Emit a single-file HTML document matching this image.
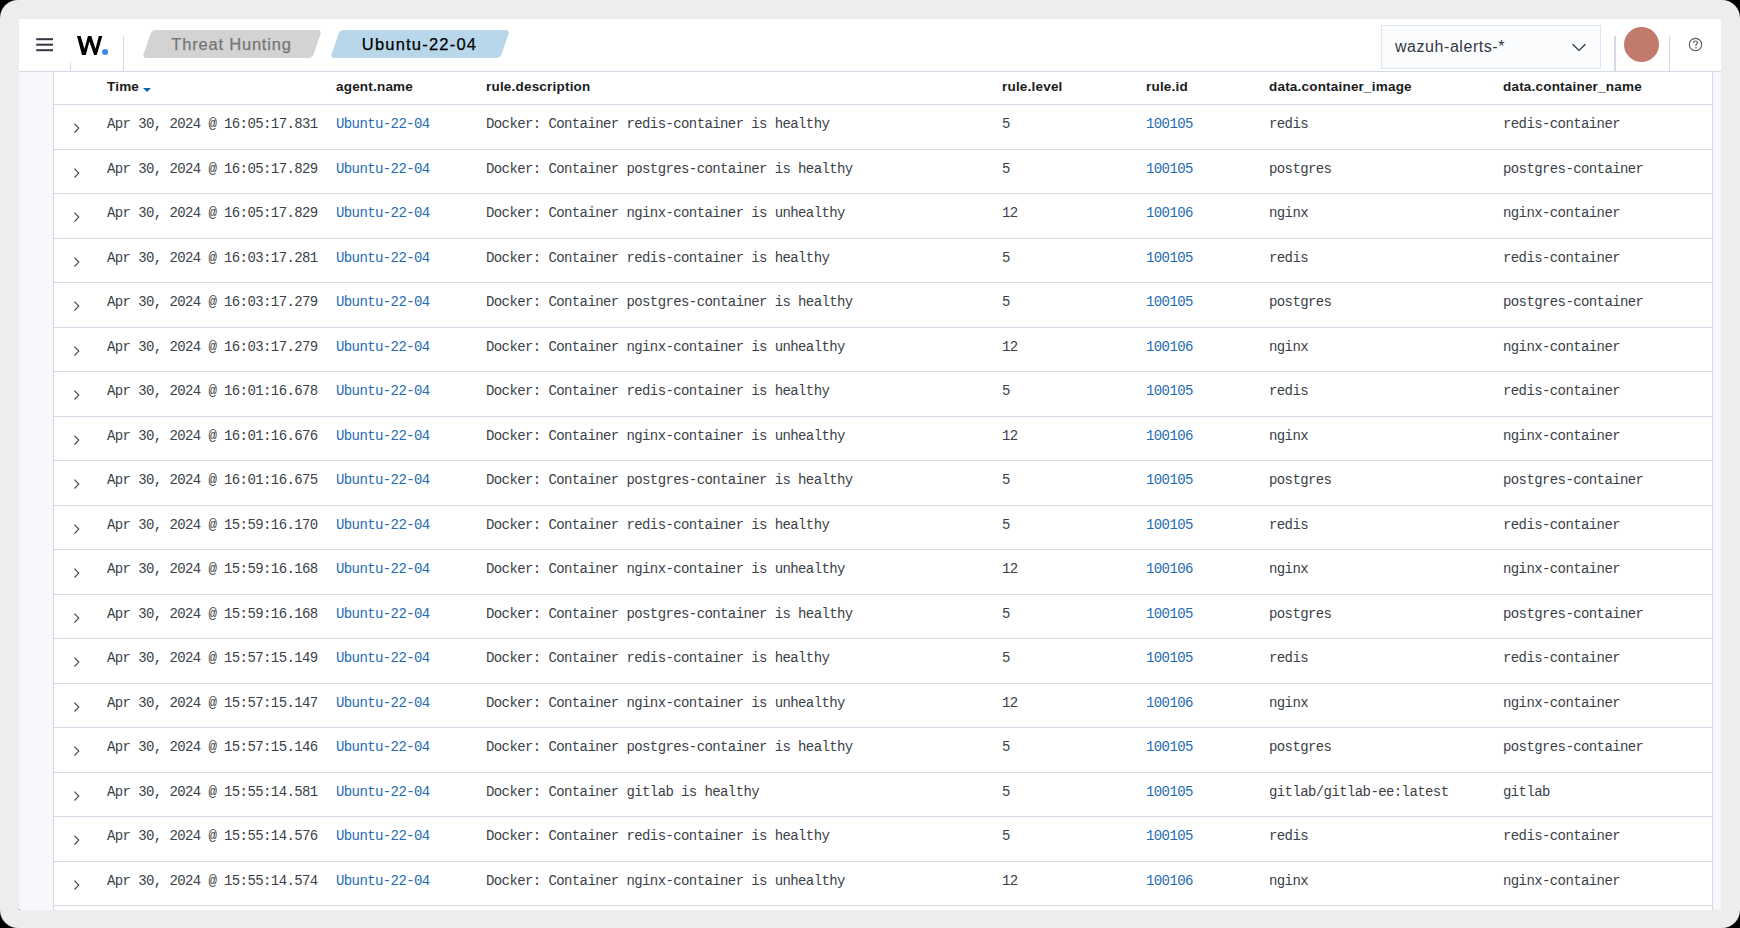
<!DOCTYPE html>
<html><head><meta charset="utf-8"><style>
html,body{margin:0;padding:0;}
body{width:1740px;height:928px;background:#000;overflow:hidden;position:relative;font-family:"Liberation Sans",sans-serif;}
.frame{position:absolute;left:0;top:0;width:1740px;height:928px;background:#ededed;border-radius:18px;}
.app{position:absolute;left:19px;top:19px;width:1702px;height:891px;background:#fff;}
.hb{position:absolute;left:19px;top:71px;width:1702px;height:1px;background:#d3dae6;}
.side{position:absolute;background:#f7f8fc;}
.vl{position:absolute;width:1px;background:#d3dae6;}
.th{position:absolute;top:79px;font:bold 13.5px/15px "Liberation Sans",sans-serif;letter-spacing:0.2px;color:#1a1c21;}
.hl{position:absolute;left:53px;width:1660px;height:1px;background:#d3dae6;}
.row{position:absolute;left:0;width:1740px;height:44px;}
.c{position:absolute;top:13px;line-height:15px;font-size:14px;letter-spacing:-0.6px;font-family:"Liberation Mono",monospace;color:#3b3f48;white-space:pre;}
.lk{color:#1f6cb3;}
.chev{position:absolute;left:69px;top:16px;width:16px;height:16px;}
.sort{display:inline-block;width:0;height:0;border-left:4px solid transparent;border-right:4px solid transparent;border-top:4.5px solid #0b64b0;margin-left:4px;vertical-align:-0.5px;}
.ham{position:absolute;left:36px;width:17px;height:2px;background:#3a3d46;border-radius:0.5px;}
.logo{position:absolute;left:70px;top:30px;}
.bc{position:absolute;top:30px;height:28px;}
.bc::before{content:"";position:absolute;left:3.6px;top:0;right:3px;bottom:-0.4px;transform:skewX(-19deg);border-radius:4px;}
.bc span{position:relative;display:block;text-align:center;font:16.5px/28px "Liberation Sans",sans-serif;letter-spacing:0.8px;-webkit-text-stroke:0.25px currentColor;}
.bc1{left:143px;width:177px;}
.bc1::before{background:#d3d3d3;}
.bc1 span{color:#767676;}
.bc2{left:331px;width:177px;}
.bc2::before{background:#b9d7ea;}
.bc2 span{color:#000;}
.sel{position:absolute;left:1381px;top:25px;width:218px;height:42px;background:#fbfcfd;border:1px solid #dfe5ef;}
.sel span{position:absolute;left:13px;top:0px;font:16px/42px "Liberation Sans",sans-serif;color:#343741;letter-spacing:0.55px;}
.selchev{position:absolute;left:189px;top:16.5px;width:16px;height:10px;}
.avatar{position:absolute;left:1624px;top:27px;width:35px;height:35px;border-radius:50%;background:#c27a6c;}
.help{position:absolute;left:1688px;top:37px;width:15px;height:15px;}

</style></head><body>
<div class="frame"></div><div class="app"></div>
<div class="side" style="left:19px;top:72px;width:34px;height:838px"></div><div class="side" style="left:1713px;top:72px;width:8px;height:838px"></div><div class="vl" style="left:53px;top:72px;height:838px"></div><div class="vl" style="left:1712px;top:72px;height:838px"></div>
<div class="hb"></div><div style="position:absolute;left:19px;top:909px;width:1px;height:1px;background:#3a8ee6"></div>
<svg style="position:absolute;left:30px;top:30px" width="30" height="30" viewBox="30 30 30 30"><rect x="36.2" y="38.2" width="16.8" height="2" fill="#343741"/><rect x="36.2" y="43.7" width="16.8" height="2" fill="#343741"/><rect x="36.2" y="49.2" width="16.8" height="2" fill="#343741"/></svg>
<svg class="logo" width="45" height="30" viewBox="70 30 45 30"><path d="M77 36 L80.6 36 L84.5 48.8 L87.9 36 L91.3 36 L95.5 48.8 L98.8 36 L102.3 36 L96.8 54.9 L94.1 54.9 L89.4 41.6 L85.8 54.9 L82 54.9 Z" fill="#000"/><circle cx="105.1" cy="52" r="3" fill="#3884f6"/></svg>
<div class="vl" style="left:70px;top:63px;height:8px"></div>
<div class="vl" style="left:123px;top:36px;height:35px"></div>
<div class="bc bc1"><span>Threat Hunting</span></div>
<div class="bc bc2"><span style="letter-spacing:1.2px">Ubuntu-22-04</span></div>
<div class="sel"><span>wazuh-alerts-*</span>
<svg class="selchev" viewBox="0 0 16 10"><path d="M1.6 1.2 L8 7.4 L14.4 1.2" fill="none" stroke="#343741" stroke-width="1.35"/></svg></div>
<div class="vl" style="left:1614px;top:36px;height:35px;width:2px;background:#d3dae6"></div>
<div class="avatar"></div>
<div class="vl" style="left:1669px;top:36px;height:35px"></div>
<svg class="help" viewBox="0 0 16 16"><circle cx="8" cy="8" r="6.6" fill="none" stroke="#535966" stroke-width="1.2"/><path d="M5.9 6.3 C5.9 4.9 7 4.3 8 4.3 C9.1 4.3 10.1 5 10.1 6.1 C10.1 7.4 8.4 7.6 8.4 8.9 L8.4 9.4" fill="none" stroke="#535966" stroke-width="1.2"/><circle cx="8.4" cy="11.4" r="0.8" fill="#535966"/></svg>
<div class="th" style="left:107px">Time<span class="sort"></span></div><div class="th" style="left:336px">agent.name</div><div class="th" style="left:486px">rule.description</div><div class="th" style="left:1002px">rule.level</div><div class="th" style="left:1146px">rule.id</div><div class="th" style="left:1269px">data.container_image</div><div class="th" style="left:1503px">data.container_name</div>
<div class="hl" style="top:104px"></div><div class="hl" style="top:149px"></div><div class="hl" style="top:193px"></div><div class="hl" style="top:238px"></div><div class="hl" style="top:282px"></div><div class="hl" style="top:327px"></div><div class="hl" style="top:371px"></div><div class="hl" style="top:416px"></div><div class="hl" style="top:460px"></div><div class="hl" style="top:505px"></div><div class="hl" style="top:549px"></div><div class="hl" style="top:594px"></div><div class="hl" style="top:638px"></div><div class="hl" style="top:683px"></div><div class="hl" style="top:727px"></div><div class="hl" style="top:772px"></div><div class="hl" style="top:816px"></div><div class="hl" style="top:861px"></div><div class="hl" style="top:905px"></div>
<div class="row" style="top:104px"><svg class="chev" viewBox="0 0 16 16"><path d="M5.4 3.6 L9.8 8.1 L5.5 12.5" fill="none" stroke="#3f434c" stroke-width="1.1"/></svg><span class="c" style="left:107px">Apr 30, 2024 @ 16:05:17.831</span><span class="c lk" style="left:336px">Ubuntu-22-04</span><span class="c" style="left:486px">Docker: Container redis-container is healthy</span><span class="c" style="left:1002px">5</span><span class="c lk" style="left:1146px">100105</span><span class="c" style="left:1269px">redis</span><span class="c" style="left:1503px">redis-container</span></div>
<div class="row" style="top:149px"><svg class="chev" viewBox="0 0 16 16"><path d="M5.4 3.6 L9.8 8.1 L5.5 12.5" fill="none" stroke="#3f434c" stroke-width="1.1"/></svg><span class="c" style="left:107px">Apr 30, 2024 @ 16:05:17.829</span><span class="c lk" style="left:336px">Ubuntu-22-04</span><span class="c" style="left:486px">Docker: Container postgres-container is healthy</span><span class="c" style="left:1002px">5</span><span class="c lk" style="left:1146px">100105</span><span class="c" style="left:1269px">postgres</span><span class="c" style="left:1503px">postgres-container</span></div>
<div class="row" style="top:193px"><svg class="chev" viewBox="0 0 16 16"><path d="M5.4 3.6 L9.8 8.1 L5.5 12.5" fill="none" stroke="#3f434c" stroke-width="1.1"/></svg><span class="c" style="left:107px">Apr 30, 2024 @ 16:05:17.829</span><span class="c lk" style="left:336px">Ubuntu-22-04</span><span class="c" style="left:486px">Docker: Container nginx-container is unhealthy</span><span class="c" style="left:1002px">12</span><span class="c lk" style="left:1146px">100106</span><span class="c" style="left:1269px">nginx</span><span class="c" style="left:1503px">nginx-container</span></div>
<div class="row" style="top:238px"><svg class="chev" viewBox="0 0 16 16"><path d="M5.4 3.6 L9.8 8.1 L5.5 12.5" fill="none" stroke="#3f434c" stroke-width="1.1"/></svg><span class="c" style="left:107px">Apr 30, 2024 @ 16:03:17.281</span><span class="c lk" style="left:336px">Ubuntu-22-04</span><span class="c" style="left:486px">Docker: Container redis-container is healthy</span><span class="c" style="left:1002px">5</span><span class="c lk" style="left:1146px">100105</span><span class="c" style="left:1269px">redis</span><span class="c" style="left:1503px">redis-container</span></div>
<div class="row" style="top:282px"><svg class="chev" viewBox="0 0 16 16"><path d="M5.4 3.6 L9.8 8.1 L5.5 12.5" fill="none" stroke="#3f434c" stroke-width="1.1"/></svg><span class="c" style="left:107px">Apr 30, 2024 @ 16:03:17.279</span><span class="c lk" style="left:336px">Ubuntu-22-04</span><span class="c" style="left:486px">Docker: Container postgres-container is healthy</span><span class="c" style="left:1002px">5</span><span class="c lk" style="left:1146px">100105</span><span class="c" style="left:1269px">postgres</span><span class="c" style="left:1503px">postgres-container</span></div>
<div class="row" style="top:327px"><svg class="chev" viewBox="0 0 16 16"><path d="M5.4 3.6 L9.8 8.1 L5.5 12.5" fill="none" stroke="#3f434c" stroke-width="1.1"/></svg><span class="c" style="left:107px">Apr 30, 2024 @ 16:03:17.279</span><span class="c lk" style="left:336px">Ubuntu-22-04</span><span class="c" style="left:486px">Docker: Container nginx-container is unhealthy</span><span class="c" style="left:1002px">12</span><span class="c lk" style="left:1146px">100106</span><span class="c" style="left:1269px">nginx</span><span class="c" style="left:1503px">nginx-container</span></div>
<div class="row" style="top:371px"><svg class="chev" viewBox="0 0 16 16"><path d="M5.4 3.6 L9.8 8.1 L5.5 12.5" fill="none" stroke="#3f434c" stroke-width="1.1"/></svg><span class="c" style="left:107px">Apr 30, 2024 @ 16:01:16.678</span><span class="c lk" style="left:336px">Ubuntu-22-04</span><span class="c" style="left:486px">Docker: Container redis-container is healthy</span><span class="c" style="left:1002px">5</span><span class="c lk" style="left:1146px">100105</span><span class="c" style="left:1269px">redis</span><span class="c" style="left:1503px">redis-container</span></div>
<div class="row" style="top:416px"><svg class="chev" viewBox="0 0 16 16"><path d="M5.4 3.6 L9.8 8.1 L5.5 12.5" fill="none" stroke="#3f434c" stroke-width="1.1"/></svg><span class="c" style="left:107px">Apr 30, 2024 @ 16:01:16.676</span><span class="c lk" style="left:336px">Ubuntu-22-04</span><span class="c" style="left:486px">Docker: Container nginx-container is unhealthy</span><span class="c" style="left:1002px">12</span><span class="c lk" style="left:1146px">100106</span><span class="c" style="left:1269px">nginx</span><span class="c" style="left:1503px">nginx-container</span></div>
<div class="row" style="top:460px"><svg class="chev" viewBox="0 0 16 16"><path d="M5.4 3.6 L9.8 8.1 L5.5 12.5" fill="none" stroke="#3f434c" stroke-width="1.1"/></svg><span class="c" style="left:107px">Apr 30, 2024 @ 16:01:16.675</span><span class="c lk" style="left:336px">Ubuntu-22-04</span><span class="c" style="left:486px">Docker: Container postgres-container is healthy</span><span class="c" style="left:1002px">5</span><span class="c lk" style="left:1146px">100105</span><span class="c" style="left:1269px">postgres</span><span class="c" style="left:1503px">postgres-container</span></div>
<div class="row" style="top:505px"><svg class="chev" viewBox="0 0 16 16"><path d="M5.4 3.6 L9.8 8.1 L5.5 12.5" fill="none" stroke="#3f434c" stroke-width="1.1"/></svg><span class="c" style="left:107px">Apr 30, 2024 @ 15:59:16.170</span><span class="c lk" style="left:336px">Ubuntu-22-04</span><span class="c" style="left:486px">Docker: Container redis-container is healthy</span><span class="c" style="left:1002px">5</span><span class="c lk" style="left:1146px">100105</span><span class="c" style="left:1269px">redis</span><span class="c" style="left:1503px">redis-container</span></div>
<div class="row" style="top:549px"><svg class="chev" viewBox="0 0 16 16"><path d="M5.4 3.6 L9.8 8.1 L5.5 12.5" fill="none" stroke="#3f434c" stroke-width="1.1"/></svg><span class="c" style="left:107px">Apr 30, 2024 @ 15:59:16.168</span><span class="c lk" style="left:336px">Ubuntu-22-04</span><span class="c" style="left:486px">Docker: Container nginx-container is unhealthy</span><span class="c" style="left:1002px">12</span><span class="c lk" style="left:1146px">100106</span><span class="c" style="left:1269px">nginx</span><span class="c" style="left:1503px">nginx-container</span></div>
<div class="row" style="top:594px"><svg class="chev" viewBox="0 0 16 16"><path d="M5.4 3.6 L9.8 8.1 L5.5 12.5" fill="none" stroke="#3f434c" stroke-width="1.1"/></svg><span class="c" style="left:107px">Apr 30, 2024 @ 15:59:16.168</span><span class="c lk" style="left:336px">Ubuntu-22-04</span><span class="c" style="left:486px">Docker: Container postgres-container is healthy</span><span class="c" style="left:1002px">5</span><span class="c lk" style="left:1146px">100105</span><span class="c" style="left:1269px">postgres</span><span class="c" style="left:1503px">postgres-container</span></div>
<div class="row" style="top:638px"><svg class="chev" viewBox="0 0 16 16"><path d="M5.4 3.6 L9.8 8.1 L5.5 12.5" fill="none" stroke="#3f434c" stroke-width="1.1"/></svg><span class="c" style="left:107px">Apr 30, 2024 @ 15:57:15.149</span><span class="c lk" style="left:336px">Ubuntu-22-04</span><span class="c" style="left:486px">Docker: Container redis-container is healthy</span><span class="c" style="left:1002px">5</span><span class="c lk" style="left:1146px">100105</span><span class="c" style="left:1269px">redis</span><span class="c" style="left:1503px">redis-container</span></div>
<div class="row" style="top:683px"><svg class="chev" viewBox="0 0 16 16"><path d="M5.4 3.6 L9.8 8.1 L5.5 12.5" fill="none" stroke="#3f434c" stroke-width="1.1"/></svg><span class="c" style="left:107px">Apr 30, 2024 @ 15:57:15.147</span><span class="c lk" style="left:336px">Ubuntu-22-04</span><span class="c" style="left:486px">Docker: Container nginx-container is unhealthy</span><span class="c" style="left:1002px">12</span><span class="c lk" style="left:1146px">100106</span><span class="c" style="left:1269px">nginx</span><span class="c" style="left:1503px">nginx-container</span></div>
<div class="row" style="top:727px"><svg class="chev" viewBox="0 0 16 16"><path d="M5.4 3.6 L9.8 8.1 L5.5 12.5" fill="none" stroke="#3f434c" stroke-width="1.1"/></svg><span class="c" style="left:107px">Apr 30, 2024 @ 15:57:15.146</span><span class="c lk" style="left:336px">Ubuntu-22-04</span><span class="c" style="left:486px">Docker: Container postgres-container is healthy</span><span class="c" style="left:1002px">5</span><span class="c lk" style="left:1146px">100105</span><span class="c" style="left:1269px">postgres</span><span class="c" style="left:1503px">postgres-container</span></div>
<div class="row" style="top:772px"><svg class="chev" viewBox="0 0 16 16"><path d="M5.4 3.6 L9.8 8.1 L5.5 12.5" fill="none" stroke="#3f434c" stroke-width="1.1"/></svg><span class="c" style="left:107px">Apr 30, 2024 @ 15:55:14.581</span><span class="c lk" style="left:336px">Ubuntu-22-04</span><span class="c" style="left:486px">Docker: Container gitlab is healthy</span><span class="c" style="left:1002px">5</span><span class="c lk" style="left:1146px">100105</span><span class="c" style="left:1269px">gitlab/gitlab-ee:latest</span><span class="c" style="left:1503px">gitlab</span></div>
<div class="row" style="top:816px"><svg class="chev" viewBox="0 0 16 16"><path d="M5.4 3.6 L9.8 8.1 L5.5 12.5" fill="none" stroke="#3f434c" stroke-width="1.1"/></svg><span class="c" style="left:107px">Apr 30, 2024 @ 15:55:14.576</span><span class="c lk" style="left:336px">Ubuntu-22-04</span><span class="c" style="left:486px">Docker: Container redis-container is healthy</span><span class="c" style="left:1002px">5</span><span class="c lk" style="left:1146px">100105</span><span class="c" style="left:1269px">redis</span><span class="c" style="left:1503px">redis-container</span></div>
<div class="row" style="top:861px"><svg class="chev" viewBox="0 0 16 16"><path d="M5.4 3.6 L9.8 8.1 L5.5 12.5" fill="none" stroke="#3f434c" stroke-width="1.1"/></svg><span class="c" style="left:107px">Apr 30, 2024 @ 15:55:14.574</span><span class="c lk" style="left:336px">Ubuntu-22-04</span><span class="c" style="left:486px">Docker: Container nginx-container is unhealthy</span><span class="c" style="left:1002px">12</span><span class="c lk" style="left:1146px">100106</span><span class="c" style="left:1269px">nginx</span><span class="c" style="left:1503px">nginx-container</span></div>
</body></html>
